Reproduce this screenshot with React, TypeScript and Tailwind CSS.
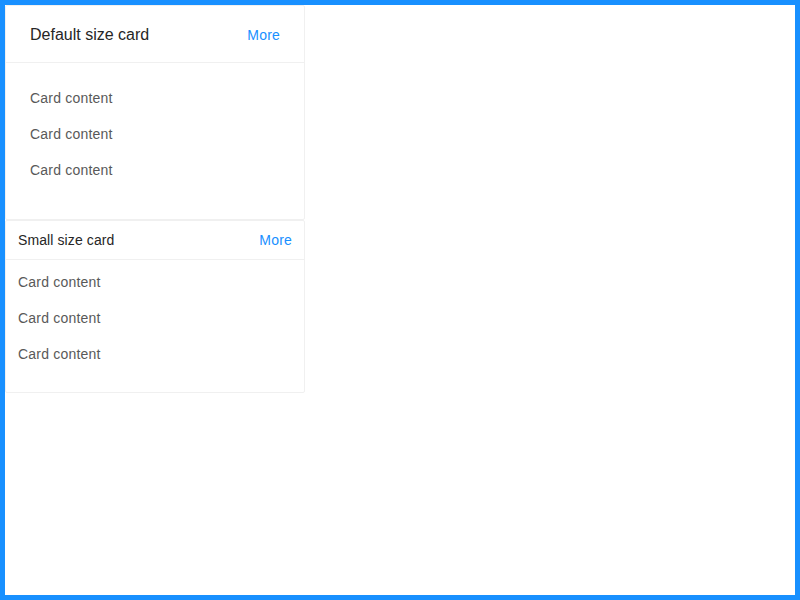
import React from "react";

type CardProps = {
  title: string;
  size?: "default" | "small";
  lines: string[];
};

function Card({ title, size = "default", lines }: CardProps) {
  const small = size === "small";
  return (
    <div className="w-[300px] rounded-[2px] border border-[#f0f0f0] bg-white">
      <div
        className={
          small
            ? "flex min-h-[38px] items-center justify-between border-b border-[#f0f0f0] px-3 py-2 text-[14px] leading-[22px] tracking-[0.1px]"
            : "flex min-h-[56px] items-center justify-between border-b border-[#f0f0f0] px-6 pt-[17px] pb-[15px] text-[16px] leading-6"
        }
      >
        <span className="text-[#262626]">{title}</span>
        <a href="#" className="text-[14px] tracking-[0.2px] text-[#1890ff]">
          More
        </a>
      </div>
      <div className={small ? "px-3 pt-[11px] pb-[13px]" : "p-6"}>
        {lines.map((line, i) => (
          <p key={i} className="mb-[14px] text-[14px] leading-[22px] tracking-[0.2px] text-[#595959]">
            {line}
          </p>
        ))}
      </div>
    </div>
  );
}

export default function App() {
  const lines = ["Card content", "Card content", "Card content"];
  return (
    <div
      className="box-border h-[600px] w-[800px] border-[5px] border-[#1890ff] bg-white"
      style={{ fontFamily: '"Liberation Sans", Arial, sans-serif' }}
    >
      <Card title="Default size card" lines={lines} />
      <Card title="Small size card" size="small" lines={lines} />
    </div>
  );
}
